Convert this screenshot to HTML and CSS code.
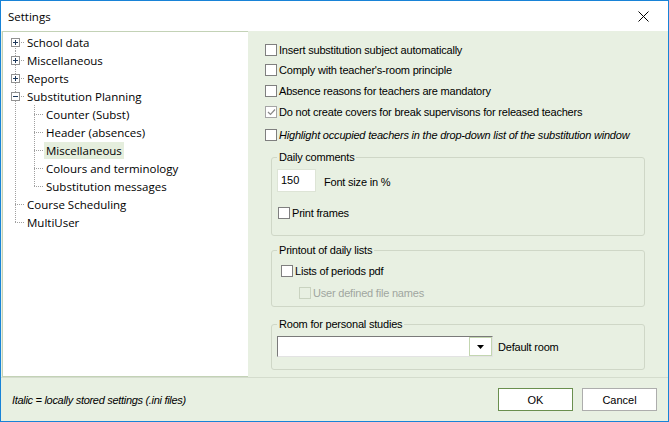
FILE: index.html
```html
<!DOCTYPE html>
<html>
<head>
<meta charset="utf-8">
<title>Settings</title>
<link rel="stylesheet" href="styles.css">
</head>
<body>
<div class="window">
  <div class="titlebar">
    <span class="title">Settings</span>
    <svg class="close" width="11" height="11" viewBox="0 0 11 11"><path d="M0.5 0.5 L10.5 10.5 M10.5 0.5 L0.5 10.5" stroke="#000" stroke-width="1" fill="none"/></svg>
  </div>
  <div class="main">
    <div class="tree">
      <div class="row"><span class="cell c-first"><svg class="exp" width="9" height="9" viewBox="0 0 9 9"><rect x="0.5" y="0.5" width="8" height="8" fill="#fff" stroke="#919191"/><path d="M2 4.5h5M4.5 2v5" stroke="#1e395b"/></svg></span><span class="lbl">School data</span></div>
      <div class="row"><span class="cell c-full"><svg class="exp" width="9" height="9" viewBox="0 0 9 9"><rect x="0.5" y="0.5" width="8" height="8" fill="#fff" stroke="#919191"/><path d="M2 4.5h5M4.5 2v5" stroke="#1e395b"/></svg></span><span class="lbl">Miscellaneous</span></div>
      <div class="row"><span class="cell c-full"><svg class="exp" width="9" height="9" viewBox="0 0 9 9"><rect x="0.5" y="0.5" width="8" height="8" fill="#fff" stroke="#919191"/><path d="M2 4.5h5M4.5 2v5" stroke="#1e395b"/></svg></span><span class="lbl">Reports</span></div>
      <div class="row"><span class="cell c-full"><svg class="exp" width="9" height="9" viewBox="0 0 9 9"><rect x="0.5" y="0.5" width="8" height="8" fill="#fff" stroke="#919191"/><path d="M2 4.5h5" stroke="#1e395b"/></svg></span><span class="lbl">Substitution Planning</span></div>
      <div class="row"><span class="cell c-pass"></span><span class="cell c-full"></span><span class="lbl">Counter (Subst)</span></div>
      <div class="row"><span class="cell c-pass"></span><span class="cell c-full"></span><span class="lbl">Header (absences)</span></div>
      <div class="row"><span class="cell c-pass"></span><span class="cell c-full"></span><span class="lbl selected">Miscellaneous</span></div>
      <div class="row"><span class="cell c-pass"></span><span class="cell c-full"></span><span class="lbl">Colours and terminology</span></div>
      <div class="row"><span class="cell c-pass"></span><span class="cell c-last"></span><span class="lbl">Substitution messages</span></div>
      <div class="row"><span class="cell c-full"></span><span class="lbl">Course Scheduling</span></div>
      <div class="row"><span class="cell c-last"></span><span class="lbl">MultiUser</span></div>
    </div>
    <div class="pane">
      <div class="chk-row r1"><span class="box"></span><span>Insert substitution subject automatically</span></div>
      <div class="chk-row r2"><span class="box"></span><span>Comply with teacher's-room principle</span></div>
      <div class="chk-row r3"><span class="box"></span><span>Absence reasons for teachers are mandatory</span></div>
      <div class="chk-row r4"><span class="box checked"><svg width="9" height="8" viewBox="0 0 9 8"><path d="M1 4 L3.5 6.5 L8 1.5" stroke="#8a8a8a" stroke-width="1.2" fill="none"/></svg></span><span>Do not create covers for break supervisons for released teachers</span></div>
      <div class="chk-row r5"><span class="box"></span><span class="italic">Highlight occupied teachers in the drop-down list of the substitution window</span></div>

      <div class="group g-daily">
        <div class="glabel">Daily comments</div>
        <div class="size-row">
          <div class="num">150</div>
          <span class="size-lbl">Font size in %</span>
        </div>
        <div class="chk-row print"><span class="box"></span><span>Print frames</span></div>
      </div>

      <div class="group g-print">
        <div class="glabel">Printout of daily lists</div>
        <div class="chk-row lists"><span class="box"></span><span>Lists of periods pdf</span></div>
        <div class="chk-row userdef disabled"><span class="box"></span><span>User defined file names</span></div>
      </div>

      <div class="group g-room">
        <div class="glabel">Room for personal studies</div>
        <div class="combo-row">
          <div class="combo">
            <div class="combo-text"></div>
            <div class="combo-btn"><svg width="7" height="4" viewBox="0 0 7 4"><path d="M0 0 H7 L3.5 4 Z" fill="#000"/></svg></div>
          </div>
          <span class="combo-lbl">Default room</span>
        </div>
      </div>
    </div>
  </div>
  <div class="footer">
    <span class="note">Italic = locally stored settings (.ini files)</span>
    <div class="buttons">
      <div class="btn default">OK</div>
      <div class="btn">Cancel</div>
    </div>
  </div>
</div>
</body>
</html>
```
FILE: styles.css
```css
* { box-sizing: border-box; }
html, body { margin: 0; padding: 0; }
body { width: 669px; height: 422px; overflow: hidden; background: #fff; }

.window {
  width: 669px;
  height: 422px;
  border: 1px solid #1883d7;
  display: flex;
  flex-direction: column;
  background: #e8f0e2;
  font-family: "Liberation Sans", Arial, sans-serif;
  font-size: 11px;
  color: #000;
}

.titlebar {
  height: 30px;
  flex: none;
  background: #fff;
  display: flex;
  align-items: center;
  justify-content: space-between;
  padding: 0 19px 0 7px;
}
.title { font-family: "Open Sans", sans-serif; font-size: 11.5px; }
.close { display: block; }

.main { height: 346px; flex: none; display: flex; }

/* tree */
.tree {
  --dv: repeating-linear-gradient(to bottom, #a0a0a0 0 1px, transparent 1px 2px);
  --dh: repeating-linear-gradient(to right, #a0a0a0 0 1px, transparent 1px 2px);
  width: 246px;
  flex: none;
  margin-left: 1px;
  background: #fff;
  border: 1px solid #c3d2b6;
  border-right: none;
  padding: 1px 0 0 3px;
  font-family: "Open Sans", sans-serif;
  font-size: 11.5px;
}
.row { display: flex; align-items: center; height: 18px; }
.cell { width: 19px; height: 18px; flex: none; display: flex; align-items: center; }
.exp { display: block; margin-left: 5px; }
.c-first {
  background: var(--dh) 9px 9px / 10px 1px no-repeat, var(--dv) 9px 9px / 1px 9px no-repeat;
}
.c-full {
  background: var(--dh) 9px 9px / 10px 1px no-repeat, var(--dv) 9px 0 / 1px 18px no-repeat;
}
.c-last {
  background: var(--dh) 9px 9px / 10px 1px no-repeat, var(--dv) 9px 0 / 1px 10px no-repeat;
}
.c-pass {
  background: var(--dv) 9px 0 / 1px 18px no-repeat;
}
.lbl { padding: 0 2px; line-height: 17px; white-space: nowrap; }
.lbl.selected { background: #e5eedd; }

/* pane */
.pane { flex: 1; padding-top: 12px; }
.chk-row { display: flex; align-items: center; height: 13px; white-space: nowrap; letter-spacing: -0.2px; }
.box {
  width: 12px; height: 12px; flex: none;
  border: 1px solid #7f7f7f;
  background: #fff;
  margin-right: 2px;
  display: flex; align-items: center; justify-content: center;
}
.box.checked { border-color: #a5a5a5; }
.italic { font-style: italic; }
.r1, .r2, .r3, .r4, .r5 { margin-left: 17px; }
.r2 { margin-top: 7px; }
.r3 { margin-top: 8px; }
.r4 { margin-top: 8px; }
.r5 { margin-top: 10px; }

.group {
  margin: 0 23px;
  border: 1px solid #cfd7c7;
  border-radius: 3px;
  padding: 0 5px;
}
.glabel {
  width: fit-content;
  margin-top: -7px;
  padding: 0 2px;
  line-height: 13px;
  background: #e8f0e2;
  letter-spacing: -0.2px;
}
.g-daily { margin-top: 16px; padding-bottom: 16px; }
.size-row { display: flex; align-items: center; margin-top: 5px; }
.num {
  width: 39px; height: 23px;
  background: #fff;
  border: 1px solid #dde4d6;
  padding: 4px 0 0 3px;
  line-height: 13px;
}
.size-lbl { margin-left: 8px; padding-top: 3px; letter-spacing: -0.2px; }
.print { margin-top: 14px; margin-left: 1px; }

.g-print { margin-top: 14px; padding-bottom: 7px; }
.lists { margin-top: 7px; margin-left: 4px; }
.userdef { margin-top: 9px; margin-left: 22px; }
.disabled { color: #a0a6a0; }
.disabled .box { border-color: #c9d3c0; background: #e8f0e2; }

.g-room { margin-top: 17px; padding-bottom: 12px; }
.combo-row { display: flex; align-items: center; margin-top: 5px; }
.combo {
  width: 216px; height: 21px;
  display: flex;
  background: #fff;
  border: 1px solid #7a7a7a;
  border-right-color: #e3e3e3;
  border-bottom-color: #e3e3e3;
}
.combo-text { flex: 1; }
.combo-btn {
  width: 23px;
  border: 1px solid #c3d6b0;
  display: flex; align-items: center; justify-content: center;
}
.combo-btn svg { display: block; }
.combo-lbl { margin-left: 5px; letter-spacing: -0.2px; }

/* footer */
.footer {
  flex: 1;
  border-top: 1px solid #d4dccd;
  display: flex;
  align-items: center;
  justify-content: space-between;
  padding: 0 11px 0 11px;
}
.note { font-style: italic; letter-spacing: -0.3px; }
.buttons { display: flex; gap: 9px; }
.btn {
  width: 75px; height: 23px;
  background: #fff;
  border: 1px solid #adadad;
  display: flex; align-items: center; justify-content: center;
}
.btn.default { border-color: #6a8f4f; }
```
